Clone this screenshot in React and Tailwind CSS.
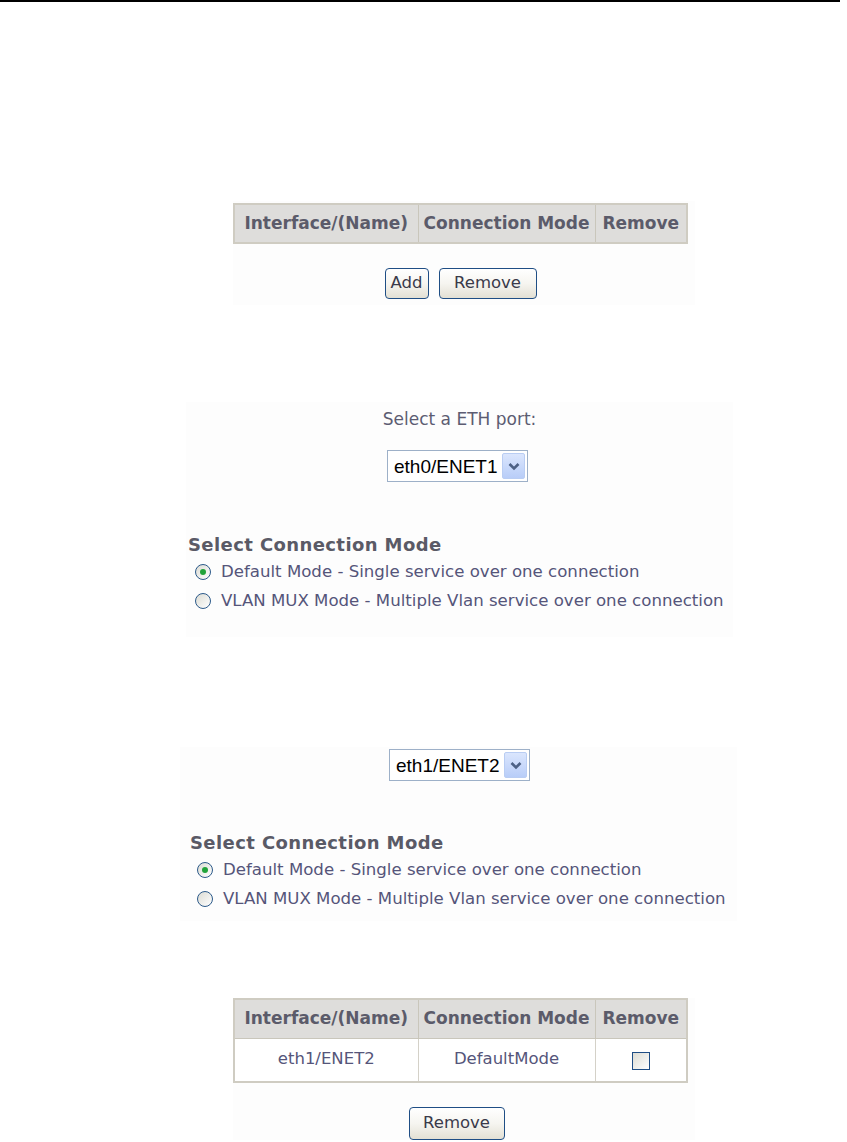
import React from 'react';

const verdana = { fontFamily: '"DejaVu Sans", Verdana, sans-serif' };

const XpButton = ({ children, className = '' }) => (
  <button
    className={`h-[31px] rounded-[4px] border border-[#1f4e85] bg-gradient-to-b from-white via-[#f6f5f0] to-[#e3e0d4] text-[16.5px] text-[#3a3a4a] ${className}`}
    style={verdana}
  >
    {children}
  </button>
);

const Select = ({ value }) => (
  <div className="flex h-[32px] w-[141px] items-center border border-[#9db0c8] bg-white pl-[6px] pr-[2px]">
    <span
      className="flex-1 text-[19px] leading-none text-black"
      style={{ fontFamily: '"Liberation Sans", Arial, sans-serif' }}
    >
      {value}
    </span>
    <span className="flex h-[26px] w-[23px] items-center justify-center rounded-[2px] border border-[#b9cdf3] bg-gradient-to-b from-[#dbe6fd] to-[#b8cdf8]">
      <svg width="12" height="9" viewBox="0 0 12 9">
        <path d="M1.5 2 L6 6.5 L10.5 2" fill="none" stroke="#4d6185" strokeWidth="2.6" />
      </svg>
    </span>
  </div>
);

const Radio = ({ checked }) => (
  <span className="flex h-[16px] w-[16px] items-center justify-center rounded-full border border-[#2c5a8a] bg-gradient-to-br from-[#dcdcd4] to-white">
    {checked && <span className="h-[6px] w-[6px] rounded-full bg-[#22a33a]" />}
  </span>
);

const ModeSection = ({ pl }) => (
  <div className={pl}>
    <div className="text-[18px] font-bold leading-[20px] tracking-[0.4px] text-[#5a5a66]" style={verdana}>
      Select Connection Mode
    </div>
    <div className="mt-[7px] flex items-center gap-[10px] pl-[7px]">
      <Radio checked />
      <span className="text-[16.6px] leading-[20px] text-[#55557a]" style={verdana}>
        Default Mode - Single service over one connection
      </span>
    </div>
    <div className="mt-[9px] flex items-center gap-[10px] pl-[7px]">
      <Radio />
      <span className="text-[16.6px] leading-[20px] text-[#55557a]" style={verdana}>
        VLAN MUX Mode - Multiple Vlan service over one connection
      </span>
    </div>
  </div>
);

const HeaderCells = () => (
  <tr className="h-[39px] bg-[#dedddb]">
    {['Interface/(Name)', 'Connection Mode', 'Remove'].map((h, i) => (
      <th
        key={h}
        className={`whitespace-nowrap border border-[#c9c6bb] px-0 text-[17px] font-bold text-[#5b5b6a] ${
          i === 0 ? 'w-[184px]' : i === 1 ? 'w-[177px]' : ''
        }`}
        style={verdana}
      >
        {h}
      </th>
    ))}
  </tr>
);

export default function App() {
  return (
    <div className="min-h-[1142px] w-[847px] bg-white">
      <div className="h-[2px] w-[840px] bg-black" />

      <div className="ml-[233px] mt-[199px] w-[462px] bg-[#fdfdfd] pb-[6px] pt-[2px]">
        <table className="w-[455px] table-fixed border-collapse border-2 border-[#cfccc2]">
          <thead>
            <HeaderCells />
          </thead>
        </table>
        <div className="mt-[24px] flex w-[455px] justify-center gap-[10px]">
          <XpButton className="w-[44px]">Add</XpButton>
          <XpButton className="w-[98px]">Remove</XpButton>
        </div>
      </div>

      <div className="ml-[186px] mt-[97px] w-[547px] bg-[#fdfdfd] pb-[26px] pt-[7px]">
        <div className="text-center text-[17px] leading-[20px] text-[#5c5c72]" style={verdana}>
          Select a ETH port:
        </div>
        <div className="mt-[21px] flex justify-center pr-[4px]">
          <Select value="eth0/ENET1" />
        </div>
        <ModeSection pl="mt-[53px] pl-[2px]" />
      </div>

      <div className="ml-[180px] mt-[110px] w-[557px] bg-[#fdfdfd] pb-[12px] pt-[2px]">
        <div className="flex justify-center pl-[2px]">
          <Select value="eth1/ENET2" />
        </div>
        <ModeSection pl="mt-[52px] pl-[10px]" />
      </div>

      <div className="ml-[233px] mt-[77px] w-[462px] bg-[#fdfdfd]">
        <table className="w-[455px] table-fixed border-collapse border-2 border-[#cfccc2]">
          <thead>
            <HeaderCells />
          </thead>
          <tbody>
            <tr className="h-[44px] bg-white">
              <td className="border border-[#d4d1c8] text-center text-[16.5px] text-[#55557a]" style={verdana}>
                eth1/ENET2
              </td>
              <td className="border border-[#d4d1c8] text-center text-[16.5px] text-[#55557a]" style={verdana}>
                DefaultMode
              </td>
              <td className="border border-[#d4d1c8] text-center">
                <span className="inline-block h-[18px] w-[18px] border border-[#1f4e85] bg-gradient-to-br from-[#dcdcd4] to-white align-middle" />
              </td>
            </tr>
          </tbody>
        </table>
        <div className="mt-[24px] flex w-[455px] justify-center pr-[8px]">
          <XpButton className="h-[33px] w-[96px]">Remove</XpButton>
        </div>
      </div>
    </div>
  );
}
